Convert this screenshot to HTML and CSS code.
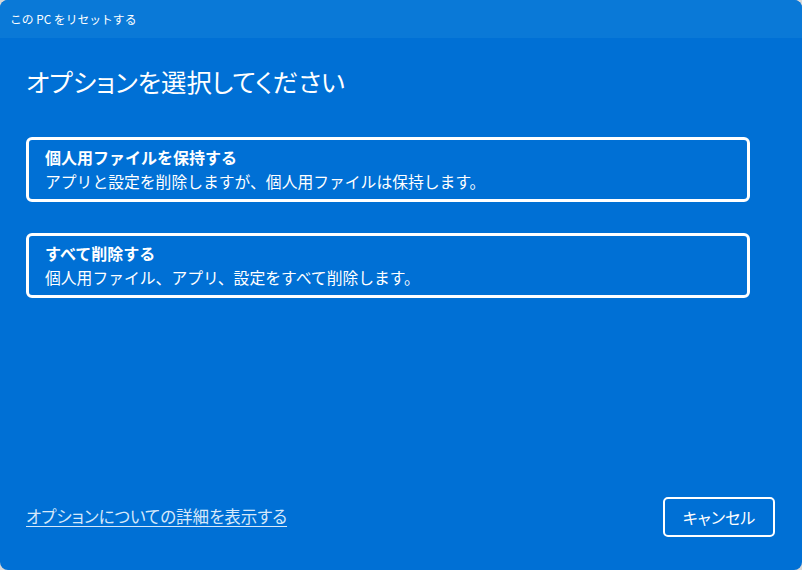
FILE: index.html
```html
<!DOCTYPE html>
<html lang="ja">
<head>
<meta charset="utf-8">
<title>この PC をリセットする</title>
<link rel="stylesheet" href="styles.css">
</head>
<body>
<div class="window">
  <div class="titlebar">この PC をリセットする</div>
  <div class="content">
    <h1 class="heading">オプションを選択してください</h1>
    <div class="options">
      <div class="option">
        <div class="option-title">個人用ファイルを保持する</div>
        <div class="option-desc">アプリと設定を削除しますが、個人用ファイルは保持します。</div>
      </div>
      <div class="option">
        <div class="option-title">すべて削除する</div>
        <div class="option-desc">個人用ファイル、アプリ、設定をすべて削除します。</div>
      </div>
    </div>
    <div class="footer">
      <a class="link" href="#">オプションについての詳細を表示する</a>
      <div class="button">キャンセル</div>
    </div>
  </div>
</div>
</body>
</html>
```
FILE: styles.css
```css
html, body {
  margin: 0;
  padding: 0;
  background: #d8d8d8;
}
body {
  font-family: "Noto Sans CJK JP", "Noto Sans", sans-serif;
  color: #ffffff;
}
.window {
  width: 802px;
  height: 570px;
  border-radius: 8px;
  overflow: hidden;
  background: #0070d5;
  display: flex;
  flex-direction: column;
}
.titlebar {
  height: 38px;
  flex: none;
  background: #0a79d7;
  font-size: 11.8px;
  line-height: 38px;
  padding-left: 10px;
}
.content {
  flex: 1;
  display: flex;
  flex-direction: column;
  padding: 0 52px 33px 26px;
}
.heading {
  margin: 25px 0 0 0;
  font-size: 25.4px;
  font-weight: 400;
  line-height: 36px;
  font-feature-settings: "palt";
}
.options {
  margin-top: 38px;
  display: flex;
  flex-direction: column;
  gap: 31px;
}
.option {
  height: 65px;
  box-sizing: border-box;
  border: 3px solid #ffffff;
  border-radius: 6px;
  padding: 5px 16px 0 16px;
}
.option-title {
  font-size: 16px;
  font-weight: 700;
  line-height: 24px;
}
.option-desc {
  font-size: 15.8px;
  line-height: 24px;
  margin-top: 1px;
}
.footer {
  margin-top: auto;
  display: flex;
  align-items: center;
  justify-content: space-between;
  margin-right: -25px;
}
.link {
  color: #d6e8fa;
  font-size: 16.5px;
  text-decoration: underline;
  text-underline-offset: 3px;
  font-feature-settings: "palt";
  margin-top: -3px;
}
.button {
  width: 112px;
  height: 40px;
  box-sizing: border-box;
  border: 2px solid #ffffff;
  border-radius: 5px;
  font-size: 16px;
  font-feature-settings: "palt";
  display: flex;
  align-items: center;
  justify-content: center;
}
```
